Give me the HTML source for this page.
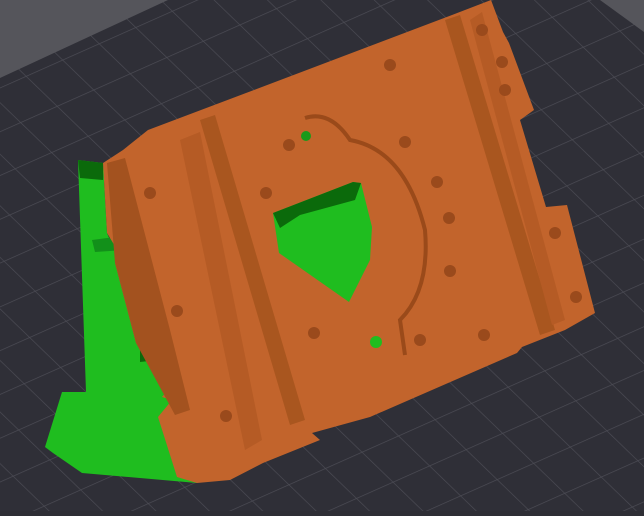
<!DOCTYPE html>
<html><head><style>html,body{margin:0;padding:0;background:#2e2e35;overflow:hidden}</style></head>
<body>
<svg width="644" height="511" viewBox="0 0 644 511" xmlns="http://www.w3.org/2000/svg">
<defs>
<pattern id="g" width="40" height="40" patternUnits="userSpaceOnUse" patternTransform="rotate(-24) skewX(22)">
<rect width="40" height="40" fill="#2f2f37"/>
<path d="M0 0H40M0 0V40" stroke="#4c4c55" stroke-width="1.4" fill="none"/>
</pattern>
</defs>
<rect width="644" height="511" fill="url(#g)"/>
<polygon points="0,0 168,0 0,78" fill="#55555b"/>
<polygon points="600,0 644,0 644,32" fill="#55555b"/>
<!-- green supports -->
<polygon points="78,160 103,163 107,233 160,353 177,413 197,483 82,473 53,453 45,447 62,392 86,392" fill="#1fbd1f"/>
<polygon points="78,160 103,163 103,180 80,178" fill="#0b6a0b"/>
<polygon points="92,240 122,236 125,250 95,252" fill="#12901a"/>
<polygon points="140,345 155,345 158,360 140,362" fill="#0b6a0b"/>
<!-- orange part -->
<polygon points="491,0 503,32 509,43 534,110 520,120 546,207 567,205 595,313 565,330 522,347 517,353 370,417 312,433 320,440 263,463 230,480 197,483 177,477 158,417 172,400 162,397 168,390 136,343 115,263 119,253 107,233 103,163 123,150 148,130 246,93 452,15" fill="#c2642c"/>
<!-- darker shaded strips -->
<polygon points="107,163 125,158 170,330 190,410 175,415 136,343 115,263" fill="#a3521f"/>
<polygon points="200,120 215,115 305,420 290,425" fill="#a9561f"/>
<polygon points="180,140 200,132 262,440 245,450" fill="#b55b25"/>
<polygon points="445,20 460,15 555,330 540,335" fill="#a9561f"/>
<polygon points="470,20 482,12 565,320 552,325" fill="#b55b25"/>
<!-- green hole -->
<polygon points="273,213 353,182 361,183 372,227 370,260 349,302 279,253" fill="#1fbd1f"/>
<polygon points="273,213 353,182 361,183 355,200 300,215 280,228" fill="#0b6a0b"/>
<!-- ring outline -->
<path d="M305 118 Q330 110 350 140 Q405 150 425 230 Q430 290 400 320 L405 355" fill="none" stroke="#9a4a1a" stroke-width="4"/>
<!-- holes -->
<g fill="#9a4a1c">
<circle cx="482" cy="30" r="6"/><circle cx="502" cy="62" r="6"/><circle cx="505" cy="90" r="6"/>
<circle cx="390" cy="65" r="6"/><circle cx="405" cy="142" r="6"/><circle cx="437" cy="182" r="6"/>
<circle cx="449" cy="218" r="6"/><circle cx="450" cy="271" r="6"/><circle cx="555" cy="233" r="6"/>
<circle cx="576" cy="297" r="6"/><circle cx="484" cy="335" r="6"/><circle cx="420" cy="340" r="6"/>
<circle cx="314" cy="333" r="6"/><circle cx="266" cy="193" r="6"/><circle cx="289" cy="145" r="6"/>
<circle cx="150" cy="193" r="6"/><circle cx="177" cy="311" r="6"/><circle cx="226" cy="416" r="6"/>
</g>
<circle cx="306" cy="136" r="5" fill="#1a9a1a"/>
<circle cx="376" cy="342" r="6" fill="#1fbd1f"/>
</svg>
</body></html>
